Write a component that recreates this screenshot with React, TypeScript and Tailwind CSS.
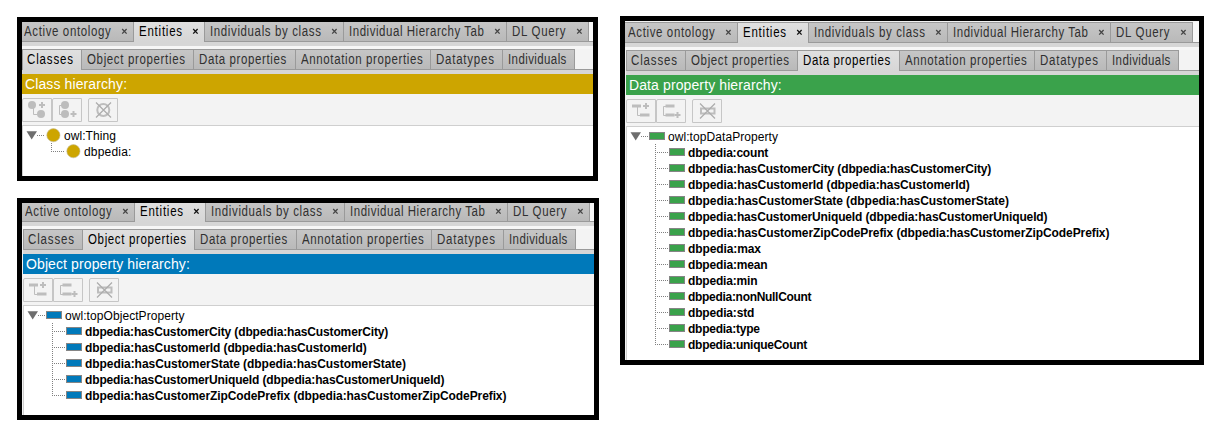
import React from "react";

type Kind = "class" | "object" | "data";

const mainTabs = [
  { label: "Active ontology", w: "w-[112px]", pad: "pl-[2px]", track: "tracking-[0.77px]" },
  { label: "Entities", w: "w-[71px]", pad: "pl-[5px]", track: "tracking-[0.95px]" },
  { label: "Individuals by class", w: "w-[139px]", pad: "pl-[5px]", track: "tracking-[0.77px]" },
  { label: "Individual Hierarchy Tab", w: "w-[163px]", pad: "pl-[5px]", track: "tracking-[0.67px]" },
  { label: "DL Query", w: "w-[82px]", pad: "pl-[5px]", track: "tracking-[0.85px]" },
];

const subTabs = [
  { label: "Classes", w: "w-[60px]", pad: "pl-[4px]", track: "tracking-[1.05px]" },
  { label: "Object properties", w: "w-[112px]", pad: "pl-[5px]", track: "tracking-[0.8px]" },
  { label: "Data properties", w: "w-[102px]", pad: "pl-[5px]", track: "tracking-[0.76px]" },
  { label: "Annotation properties", w: "w-[135px]", pad: "pl-[5px]", track: "tracking-[0.77px]" },
  { label: "Datatypes", w: "w-[72px]", pad: "pl-[5px]", track: "tracking-[0.95px]" },
  { label: "Individuals", w: "w-[72px]", pad: "pl-[5px]", track: "tracking-[0.5px]" },
];

const activeTab = "bg-linear-to-b from-[#e0e0e0] to-[#d6d6d6] text-black";
const idleTab = "border-b bg-linear-to-b from-[#c6c6c6] to-[#b9b9b9] text-[#303030]";

function TabLabel({ text, track }: { text: string; track: string }) {
  return (
    <span
      className={`block w-0 origin-left scale-x-[0.82] whitespace-nowrap font-['Liberation_Sans',sans-serif] text-[14px] leading-[18px] ${track}`}
    >
      {text}
    </span>
  );
}

function MainTabs({ height, inset }: { height: string; inset: boolean }) {
  return (
    <div className={`flex shrink-0 items-end overflow-hidden ${height}`}>
      {mainTabs.map((t, i) => (
        <div
          key={t.label}
          className={`flex h-[21px] shrink-0 items-start justify-between border-t border-r border-[#9a9a9a] pr-[5px] ${
            inset && i === 0 ? "w-[113px] pl-[3px]" : `${t.w} ${t.pad}`
          } ${i === 1 ? activeTab : idleTab}`}
        >
          <TabLabel text={t.label} track={t.track} />
          <svg width="7" height="7" viewBox="0 0 7 7" className="mt-[6px] shrink-0">
            <path d="M1.2 1L5.6 5.6M5.6 1L1.2 5.6" stroke={i === 1 ? "#111" : "#444"} strokeWidth="1.3" />
          </svg>
        </div>
      ))}
      <div className="h-[21px] grow border-b border-[#9a9a9a] bg-[#f8f8f8]" />
    </div>
  );
}

function SubTabs({ active }: { active: number }) {
  return (
    <div className="flex h-[21px] shrink-0 bg-[#f3f3f3]">
      {subTabs.map((t, i) => (
        <div
          key={t.label}
          className={`h-[21px] shrink-0 border-t border-r border-[#9a9a9a] ${t.w} ${t.pad} ${
            i === 0 ? "border-l" : ""
          } ${i === active ? activeTab : idleTab}`}
        >
          <TabLabel text={t.label} track={t.track} />
        </div>
      ))}
      <div className="grow border-b border-[#9a9a9a]" />
    </div>
  );
}

function ToolButton({ children }: { children: React.ReactNode }) {
  return (
    <div className="h-[24px] w-[30px] rounded-tl-[2px] border border-[#c6c6c6]">
      <svg width="28" height="22" viewBox="1 1 28 22" fill="none" stroke="#bdbdbd">
        {children}
      </svg>
    </div>
  );
}

function Toolbar({ kind }: { kind: Kind }) {
  const round = kind === "class";
  return (
    <div className="flex h-[31px] shrink-0 bg-[#f3f3f3] pt-[4px]">
      <ToolButton>
        {round ? (
          <>
            <circle cx="10" cy="7" r="4" fill="#bdbdbd" stroke="none" />
            <circle cx="19" cy="16" r="4" fill="#bdbdbd" stroke="none" />
          </>
        ) : (
          <path d="M6 7h9M14 16h9.5" strokeWidth="3" />
        )}
        <path d="M11.5 8v8.5H15" />
        <path d="M17 7h6M20 4v6" strokeWidth="2" />
      </ToolButton>
      <ToolButton>
        {round ? (
          <>
            <circle cx="13" cy="7" r="4" fill="#bdbdbd" stroke="none" />
            <circle cx="13" cy="16" r="4" fill="#bdbdbd" stroke="none" />
          </>
        ) : (
          <path d="M9.5 7h9M9.5 16h9" strokeWidth="3" />
        )}
        <path d="M10 7.5H7.5v9H10" />
        <path d="M18.5 16h6M21.5 13v6" strokeWidth="2" />
      </ToolButton>
      <div className="w-[6px]" />
      <ToolButton>
        {round ? (
          <circle cx="15.3" cy="12" r="6" strokeWidth="2" />
        ) : (
          <rect x="9" y="9.5" width="13.5" height="5" strokeWidth="2" />
        )}
        <path d="M8 4.5l15 15M23 4.5l-15 15" strokeWidth="1.3" stroke="#adadad" />
      </ToolButton>
    </div>
  );
}

const fills: Record<Kind, string> = { class: "#cda500", object: "#0079ba", data: "#3aa24b" };

function Marker({ kind, x }: { kind: Kind; x: number }) {
  return kind === "class" ? (
    <circle cx={x + 8.4} cy="8.2" r="6.6" fill={fills[kind]} stroke="#c4bda0" strokeWidth="0.6" />
  ) : (
    <rect x={x + 0.5} y="4.5" width="15" height="7" fill={fills[kind]} stroke="#858585" />
  );
}

interface Item {
  text: string;
  track: string;
}

function Tree({ kind, root, items }: { kind: Kind; root: string; items: Item[] }) {
  const bold = kind !== "class";
  return (
    <div className="grow border-t border-l border-[#cfcfcf] bg-white pt-px font-['Liberation_Sans',sans-serif] text-[12px] leading-[18px] text-black">
      <div className="flex h-[16px] whitespace-nowrap">
        <svg width="41" height="16" className="shrink-0">
          <path d="M3.5 4.2h10.5L8.7 12.5z" fill="#6e6e6e" />
          <path d="M14 8.5h7" stroke="#808080" strokeDasharray="1 1" />
          <Marker kind={kind} x={22} />
        </svg>
        <span className="tracking-[0.07px]">{root}</span>
      </div>
      {items.map((item, i) => (
        <div key={item.text} className="flex h-[16px] whitespace-nowrap">
          <svg width="61" height="16" className="shrink-0">
            <path d={i === items.length - 1 ? "M28.5 0v9" : "M28.5 0v16"} stroke="#808080" strokeDasharray="1 1" />
            <path d="M30 8.5h11" stroke="#808080" strokeDasharray="1 1" />
            <Marker kind={kind} x={42} />
          </svg>
          <span className={`${bold ? "font-bold" : ""} ${item.track}`}>{item.text}</span>
        </div>
      ))}
    </div>
  );
}

interface PanelProps {
  kind: Kind;
  title: string;
  active: number;
  frame: string;
  tabsHeight: string;
  inset?: boolean;
  bar: string;
  root: string;
  items: Item[];
}

function Panel({ kind, title, active, frame, tabsHeight, inset = false, bar, root, items }: PanelProps) {
  return (
    <section className={`flex flex-col overflow-hidden border-[5px] border-black bg-[#f3f3f3] ${frame}`}>
      <MainTabs height={tabsHeight} inset={inset} />
      <div className="h-[4px] shrink-0 bg-[#d6d6d6]" />
      <div className="h-[3px] shrink-0 bg-[#f6f6f6]" />
      <div className={`flex grow flex-col ${inset ? "pl-px" : ""}`}>
        <SubTabs active={active} />
        <div className="h-[4px] shrink-0 bg-[#d6d6d6]" />
        <h2
          className={`h-[20px] shrink-0 whitespace-nowrap pl-[3px] font-['Liberation_Sans',sans-serif] text-[14px] leading-[20px] tracking-[0.11px] text-white ${bar}`}
        >
          {title}
        </h2>
        <Toolbar kind={kind} />
        <Tree kind={kind} root={root} items={items} />
      </div>
    </section>
  );
}

const pair = (name: string, track: string): Item => ({ text: `dbpedia:${name} (dbpedia:${name})`, track });
const single = (name: string, track: string): Item => ({ text: `dbpedia:${name}`, track });

const customer = [
  pair("hasCustomerCity", "tracking-[-0.14px]"),
  pair("hasCustomerId", "tracking-[-0.1px]"),
  pair("hasCustomerState", "tracking-[-0.05px]"),
  pair("hasCustomerUniqueId", "tracking-[-0.14px]"),
  pair("hasCustomerZipCodePrefix", "tracking-[-0.09px]"),
];

export default function App() {
  return (
    <main className="flex h-[438px] w-[1228px] items-start overflow-hidden bg-white pl-[17px] pt-[16px]">
      <div className="flex w-[603px] shrink-0 flex-col gap-[17px] pt-px">
        <Panel
          kind="class"
          title="Class hierarchy:"
          active={0}
          frame="h-[164px] w-[581px]"
          tabsHeight="h-[20px]"
          bar="bg-[#cda500]"
          root="owl:Thing"
          items={[single("", "tracking-[0.2px]")]}
        />
        <Panel
          kind="object"
          title="Object property hierarchy:"
          active={1}
          frame="h-[222px] w-[582px]"
          tabsHeight="h-[19px]"
          inset
          bar="bg-[#0079ba]"
          root="owl:topObjectProperty"
          items={customer}
        />
      </div>
      <Panel
        kind="data"
        title="Data property hierarchy:"
        active={2}
        frame="h-[349px] w-[584px]"
        tabsHeight="h-[22px]"
        inset
        bar="bg-[#3aa24b]"
        root="owl:topDataProperty"
        items={[
          single("count", "tracking-[-0.2px]"),
          ...customer,
          single("max", "tracking-[-0.1px]"),
          single("mean", "tracking-[-0.15px]"),
          single("min", "tracking-[-0.18px]"),
          single("nonNullCount", "tracking-[-0.3px]"),
          single("std", "tracking-[-0.17px]"),
          single("type", "tracking-[-0.25px]"),
          single("uniqueCount", "tracking-[-0.26px]"),
        ]}
      />
    </main>
  );
}
